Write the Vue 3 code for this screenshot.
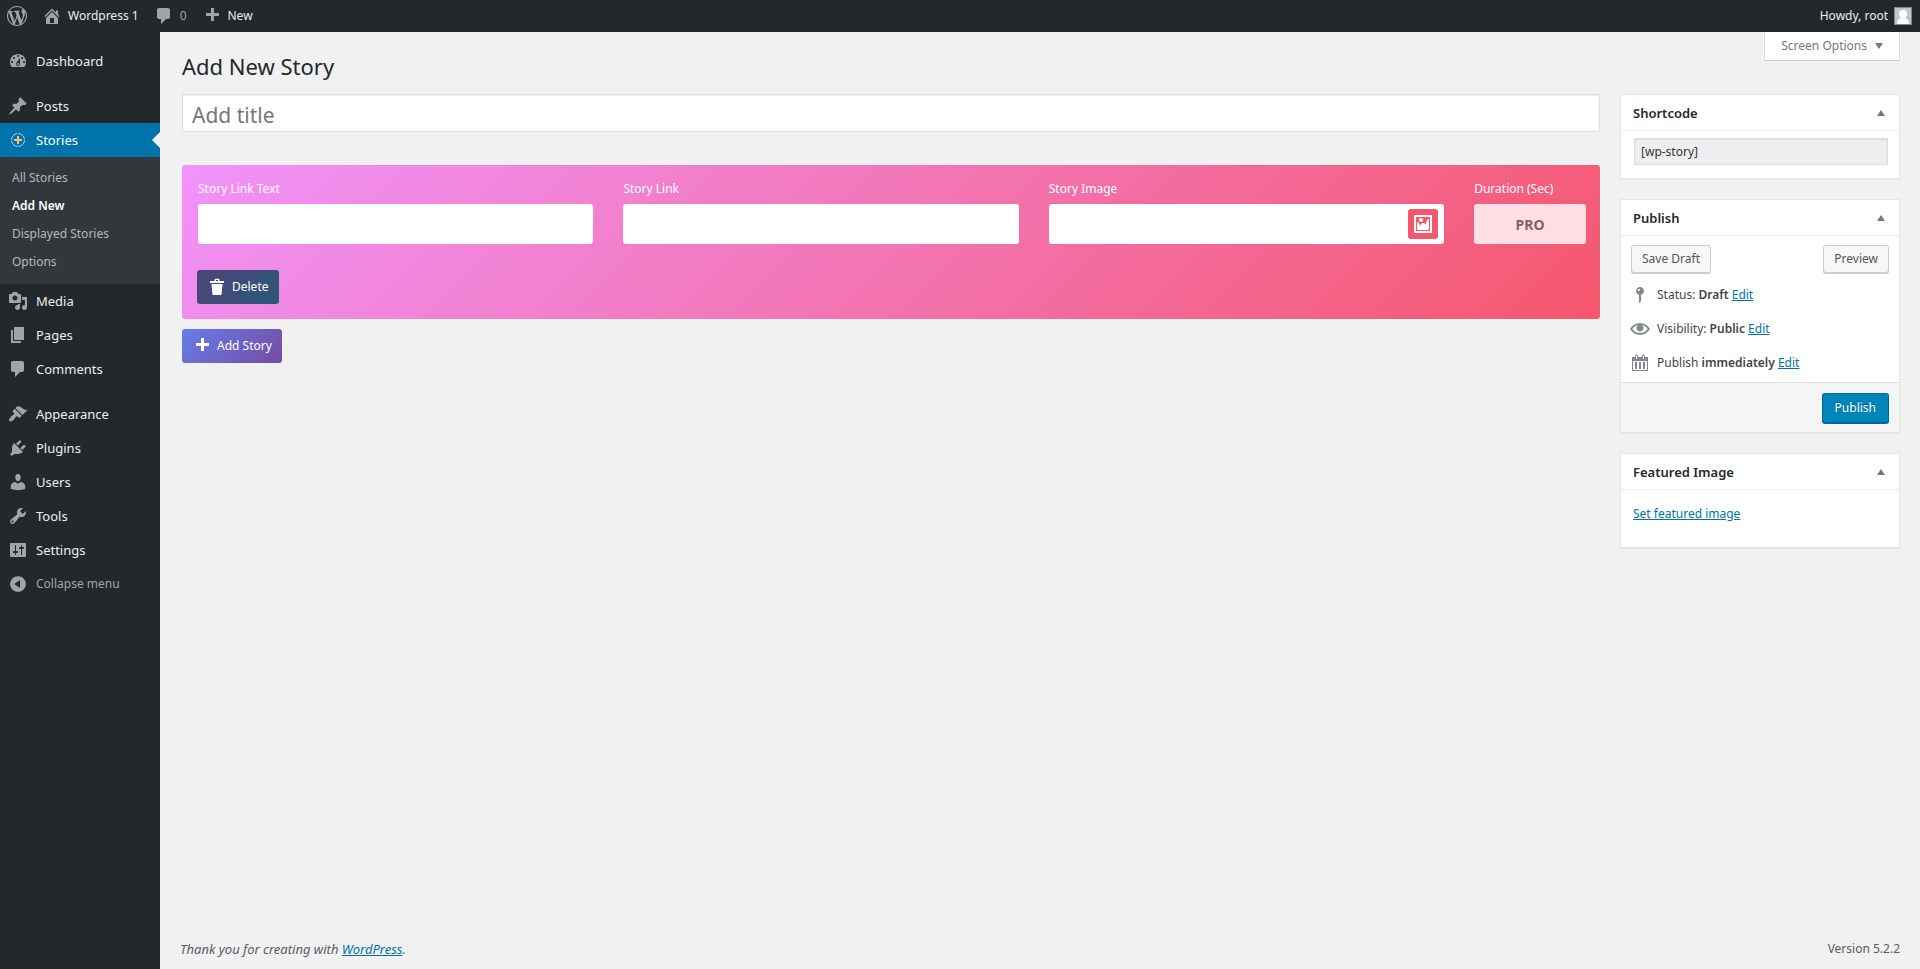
<template>
  <div class="admin">

    <header class="adminbar">
      <nav class="bar-left">
        <a href="#" class="bar-item" aria-label="About WordPress">
          <svg class="icon" viewBox="0 0 20 20"><path :d="icons.wordpress" /></svg>
        </a>
        <a href="#" class="bar-item">
          <svg class="icon" viewBox="0 0 20 20"><path :d="icons.home" /></svg>
          <span>Wordpress 1</span>
        </a>
        <a href="#" class="bar-item count">
          <svg class="icon" viewBox="0 0 20 20"><path :d="icons.comments" /></svg>
          <span>0</span>
        </a>
        <a href="#" class="bar-item">
          <svg class="icon" viewBox="0 0 20 20"><path :d="icons.plus" /></svg>
          <span>New</span>
        </a>
      </nav>
      <a href="#" class="bar-item account">
        <span>Howdy, root</span>
        <svg class="avatar" viewBox="0 0 18 18">
          <rect width="18" height="18" fill="#82878c" />
          <rect x="1" y="1" width="16" height="16" fill="#c5c5c5" />
          <circle cx="9" cy="7" r="4" fill="#fff" />
          <path d="M3 17c0-4 2.500-5.500 4-6.500h4c1.500 1 4 2.500 4 6.500z" fill="#fff" />
        </svg>
      </a>
    </header>

    <div class="body">
      <aside class="sidebar">
        <ul class="menu">
          <li v-for="item in menu" :key="item.label" :class="{ active: item.children, spaced: item.spaced }">
            <a href="#" class="menu-link">
              <svg v-if="item.icon" class="icon" viewBox="0 0 20 20"><path :d="icons[item.icon]" /></svg>
              <svg v-else class="icon" viewBox="0 0 20 20">
                <circle cx="10" cy="10" r="6.500" fill="none" stroke="#b9d3e0" stroke-dasharray="9 1" />
                <path d="M9 6h2v3h3v2h-3v3H9v-3H6V9h3z" fill="#f6c078" />
              </svg>
              <span>{{ item.label }}</span>
            </a>
            <ul v-if="item.children" class="submenu">
              <li v-for="child in item.children" :key="child">
                <a href="#" :class="{ current: child === 'Add New' }">{{ child }}</a>
              </li>
            </ul>
          </li>
        </ul>
        <button type="button" class="menu-link collapse">
          <svg class="icon" viewBox="0 0 20 20"><path :d="icons.collapse" /></svg>
          <span>Collapse menu</span>
        </button>
      </aside>

      <main class="content">
        <div class="top">
          <h1>Add New Story</h1>
          <button type="button" class="screen-options">
            Screen Options
            <svg class="arrow" viewBox="0 0 8 6"><path d="M0 0h8L4 6z" /></svg>
          </button>
        </div>

        <form class="columns" @submit.prevent>
          <div class="primary">
            <input v-model="title" class="title" type="text" placeholder="Add title" aria-label="Add title">

            <section class="story">
              <div class="fields">
                <div class="field">
                  <label for="link-text">Story Link Text</label>
                  <input id="link-text" type="text">
                </div>
                <div class="field">
                  <label for="link">Story Link</label>
                  <input id="link" type="text">
                </div>
                <div class="field">
                  <label for="image">Story Image</label>
                  <div class="picker">
                    <input id="image" type="text">
                    <button type="button" class="pick" aria-label="Choose image">
                      <svg class="icon" viewBox="0 0 20 20"><path :d="icons.image" /></svg>
                    </button>
                  </div>
                </div>
                <div class="field duration">
                  <label for="duration">Duration (Sec)</label>
                  <input id="duration" type="text" value="PRO" disabled>
                </div>
              </div>
              <button type="button" class="story-button delete">
                <svg class="icon" viewBox="0 0 20 20"><path :d="icons.trash" /></svg>
                Delete
              </button>
            </section>

            <button type="button" class="story-button add">
              <svg class="icon" viewBox="0 0 20 20"><path :d="icons.plus" /></svg>
              Add Story
            </button>
          </div>

          <div class="secondary">
            <section class="postbox">
              <div class="postbox-head">
                <h2>Shortcode</h2>
                <button type="button" class="toggle" aria-label="Toggle Shortcode">
                  <svg class="arrow" viewBox="0 0 8 6"><path d="M0 6h8L4 0z" /></svg>
                </button>
              </div>
              <div class="shortcode">
                <input type="text" value="[wp-story]" readonly aria-label="Shortcode">
              </div>
            </section>

            <section class="postbox">
              <div class="postbox-head">
                <h2>Publish</h2>
                <button type="button" class="toggle" aria-label="Toggle Publish">
                  <svg class="arrow" viewBox="0 0 8 6"><path d="M0 6h8L4 0z" /></svg>
                </button>
              </div>
              <div class="draft-actions">
                <button type="button" class="button">Save Draft</button>
                <button type="button" class="button">Preview</button>
              </div>
              <ul class="misc">
                <li v-for="row in publishing" :key="row.icon">
                  <svg class="icon" viewBox="0 0 20 20"><path :d="icons[row.icon]" /></svg>
                  <span>{{ row.label }} <b>{{ row.value }}</b> <a href="#">Edit</a></span>
                </li>
              </ul>
              <div class="publish-actions">
                <button type="submit" class="button main">Publish</button>
              </div>
            </section>

            <section class="postbox">
              <div class="postbox-head">
                <h2>Featured Image</h2>
                <button type="button" class="toggle" aria-label="Toggle Featured Image">
                  <svg class="arrow" viewBox="0 0 8 6"><path d="M0 6h8L4 0z" /></svg>
                </button>
              </div>
              <div class="featured">
                <a href="#">Set featured image</a>
              </div>
            </section>
          </div>
        </form>

        <footer class="footer">
          <em>Thank you for creating with <a href="#">WordPress</a>.</em>
          <span>Version 5.2.2</span>
        </footer>
      </main>
    </div>

  </div>
</template>

<script setup>
  import { ref } from "vue";

  const title = ref("");

  const menu = [
    { label: "Dashboard", icon: "dashboard" },
    { label: "Posts", icon: "post", spaced: true },
    { label: "Stories", children: ["All Stories", "Add New", "Displayed Stories", "Options"] },
    { label: "Media", icon: "media" },
    { label: "Pages", icon: "page" },
    { label: "Comments", icon: "comments" },
    { label: "Appearance", icon: "appearance", spaced: true },
    { label: "Plugins", icon: "plugins" },
    { label: "Users", icon: "users" },
    { label: "Tools", icon: "tools" },
    { label: "Settings", icon: "settings" },
  ];

  const publishing = [
    { icon: "status", label: "Status:", value: "Draft" },
    { icon: "visibility", label: "Visibility:", value: "Public" },
    { icon: "calendar", label: "Publish", value: "immediately" },
  ];

  const icons = {
    wordpress: "M20 10c0-5.510-4.490-10-10-10C4.480 0 0 4.490 0 10c0 5.520 4.480 10 10 10 5.510 0 10-4.480 10-10zM7.780 15.370L4.370 6.220c.55-.02 1.170-.08 1.170-.08.5-.06.44-1.130-.06-1.110 0 0-1.450.11-2.370.11-.18 0-.37 0-.58-.01C4.120 2.690 6.870 1.110 10 1.110c2.330 0 4.450.87 6.050 2.340-.68-.11-1.650.39-1.650 1.580 0 .74.45 1.360.9 2.100.35.61.55 1.360.55 2.460 0 1.490-1.400 5-1.400 5l-3.030-8.370c.54-.02.82-.17.82-.17.5-.05.44-1.250-.06-1.220 0 0-1.440.12-2.380.12-.87 0-2.330-.12-2.330-.12-.5-.03-.56 1.200-.06 1.220l.92.08 1.260 3.410zM17.410 10c.24-.64.74-1.870.43-4.250.7 1.290 1.050 2.710 1.050 4.250 0 3.290-1.730 6.240-4.400 7.780.97-2.590 1.940-5.200 2.920-7.780zM6.100 18.090C3.120 16.650 1.110 13.530 1.110 10c0-1.300.23-2.480.72-3.590C3.250 10.300 4.670 14.200 6.100 18.090zm4.030-6.630l2.580 6.980c-.86.29-1.760.45-2.710.45-.79 0-1.570-.11-2.290-.33.81-2.380 1.620-4.740 2.420-7.100z",
    home: "M16 8.500l1.530 1.530-1.060 1.060L10 4.600l-6.470 6.490-1.060-1.060L10 2.500l4 4v-2h2v4zm-6-2.460l6 5.990V18H4v-5.970zM12 17v-5H8v5h4z",
    comments: "M5 2h9c1.100 0 2 .9 2 2v7c0 1.100-.9 2-2 2h-2l-5 5v-5H5c-1.100 0-2-.9-2-2V4c0-1.100.9-2 2-2z",
    plus: "M17 7v3h-5v5H9v-5H4V7h5V2h3v5h5z",
    dashboard: "M3.760 16h12.480c1.100-1.370 1.760-3.110 1.760-5 0-4.420-3.580-8-8-8s-8 3.580-8 8c0 1.890.66 3.630 1.760 5zM10 4c.55 0 1 .45 1 1s-.45 1-1 1-1-.45-1-1 .45-1 1-1zM6 6c.55 0 1 .45 1 1s-.45 1-1 1-1-.45-1-1 .45-1 1-1zm8 0c.55 0 1 .45 1 1s-.45 1-1 1-1-.45-1-1 .45-1 1-1zm-5.370 5.550L12 7v6c0 1.100-.9 2-2 2s-2-.9-2-2c0-.57.24-1.080.63-1.450zM4 10c.55 0 1 .45 1 1s-.45 1-1 1-1-.45-1-1 .45-1 1-1zm12 0c.55 0 1 .45 1 1s-.45 1-1 1-1-.45-1-1 .45-1 1-1zm-5 3c0-.55-.45-1-1-1s-1 .45-1 1 .45 1 1 1 1-.45 1-1z",
    post: "M10.440 3.020l1.820-1.820 6.360 6.350-1.830 1.820c-1.050-.68-2.480-.57-3.410.36l-.75.75c-.92.93-1.040 2.350-.35 3.410l-1.830 1.820-2.410-2.410-2.800 2.790c-.42.42-3.380 2.710-3.800 2.290s1.860-3.390 2.280-3.810l2.790-2.790L4.100 9.360l1.830-1.820c1.050.69 2.480.57 3.400-.36l.75-.75c.93-.92 1.050-2.350.36-3.410z",
    media: "M13 11V4c0-.55-.45-1-1-1h-1.670L9 1H5L3.670 3H2c-.55 0-1 .45-1 1v7c0 .55.45 1 1 1h10c.55 0 1-.45 1-1zM7 4.500c1.380 0 2.500 1.120 2.500 2.500S8.380 9.500 7 9.500 4.500 8.380 4.500 7 5.620 4.500 7 4.500zM14 6h5v10.500c0 1.380-1.120 2.500-2.500 2.500S14 17.880 14 16.500s1.120-2.500 2.500-2.500c.17 0 .34.02.5.05V9h-3V6zm-4 8.050V13h2v3.500c0 1.380-1.120 2.500-2.500 2.500S7 17.880 7 16.500 8.120 14 9.500 14c.17 0 .34.02.5.05z",
    page: "M6 15V2h10v13H6zm-1 1h8v2H3V5h2v11z",
    appearance: "M14.480 11.060L7.410 3.990l1.500-1.500c.5-.56 2.300-.47 3.510.32 1.210.8 1.430 1.280 2.910 2.100 1.180.64 2.450 1.260 4.450.85zm-.71.71L6.700 4.700 4.930 6.470c-.39.39-.39 1.020 0 1.410l1.060 1.060c.39.39.39 1.030 0 1.420-.6.6-1.430 1.110-2.210 1.690-.35.26-.7.53-1.010.84C1.430 14.230.4 16.080 1.400 17.070c.99 1 2.840-.03 4.180-1.360.31-.31.58-.66.85-1.020.57-.78 1.080-1.610 1.690-2.210.39-.39 1.020-.39 1.410 0l1.060 1.060c.39.39 1.020.39 1.410 0z",
    plugins: "M13.110 4.360L9.870 7.600 8 5.730l3.240-3.240c.35-.34 1.050-.2 1.560.32.52.51.66 1.210.31 1.550zm-8 1.770l.91-1.120 9.010 9.010-1.190.84c-.71.71-2.630 1.160-3.820 1.160H6.140L4.900 17.260c-.59.59-1.540.59-2.120 0-.59-.58-.59-1.530 0-2.120l1.240-1.240v-3.880c0-1.130.4-3.190 1.090-3.890zm7.260 3.970l3.240-3.240c.34-.35 1.040-.21 1.550.31.52.51.66 1.210.31 1.550l-3.240 3.250z",
    users: "M10 9.250c-2.270 0-2.730-3.440-2.730-3.440C7 4.020 7.820 2 9.970 2c2.160 0 2.980 2.020 2.710 3.810 0 0-.41 3.440-2.680 3.440zm0 2.570L12.720 10c2.390 0 4.520 2.330 4.520 4.530v2.490s-3.650 1.130-7.240 1.130c-3.650 0-7.240-1.130-7.240-1.130v-2.490c0-2.250 1.940-4.480 4.470-4.480z",
    tools: "M16.680 9.770c-1.340 1.340-3.300 1.670-4.950.99l-5.410 6.520c-.99.99-2.590.99-3.580 0s-.99-2.590 0-3.570l6.520-5.420c-.68-1.650-.35-3.610.99-4.950 1.280-1.280 3.120-1.620 4.720-1.060l-2.890 2.890 2.820 2.820 2.860-2.870c.53 1.580.18 3.390-1.080 4.650zM3.810 16.210c.4.39 1.040.39 1.430 0 .4-.4.4-1.040 0-1.430-.39-.4-1.030-.4-1.430 0-.39.39-.39 1.030 0 1.430z",
    settings: "M18 16V4c0-.55-.45-1-1-1H3c-.55 0-1 .45-1 1v12c0 .55.45 1 1 1h14c.55 0 1-.45 1-1zM8 11h1c.55 0 1 .45 1 1s-.45 1-1 1H8v1.500c0 .28-.22.5-.5.5s-.5-.22-.5-.5V13H6c-.55 0-1-.45-1-1s.45-1 1-1h1V5.500c0-.28.22-.5.5-.5s.5.22.5.5V11zm5-2h-1c-.55 0-1-.45-1-1s.45-1 1-1h1V5.500c0-.28.22-.5.5-.5s.5.22.5.5V7h1c.55 0 1 .45 1 1s-.45 1-1 1h-1v5.500c0 .28-.22.5-.5.5s-.5-.22-.5-.5V9z",
    collapse: "M10 2.160c4.330 0 7.840 3.510 7.840 7.840s-3.510 7.840-7.840 7.840S2.160 14.330 2.160 10 5.710 2.160 10 2.160zm2 11.720V6.120L6.180 9.970z",
    image: "M2.250 1h15.500c.69 0 1.250.56 1.250 1.250v15.500c0 .69-.56 1.250-1.250 1.250H2.250C1.560 19 1 18.440 1 17.750V2.250C1 1.560 1.560 1 2.250 1zM17 17V3H3v14h14zM10 6c0-1.100-.9-2-2-2s-2 .9-2 2 .9 2 2 2 2-.9 2-2zm3 5s0-6 3-6v10c0 .55-.45 1-1 1H5c-.55 0-1-.45-1-1V8c2 0 3 4 3 4s1-3 3-3 3 2 3 2z",
    trash: "M7.500 4V3c0-.8.500-1.300 1.300-1.300h2.400c.8 0 1.300.500 1.300 1.300v1H17v2H3V4zM9 4h2V3H9zM4.500 7h11l-1 11h-9z",
    status: "M14 6c0 1.860-1.280 3.410-3 3.860V16c0 1-2 2-2 2V9.860c-1.720-.45-3-2-3-3.860 0-2.210 1.790-4 4-4s4 1.790 4 4zM8 5c0 .55.45 1 1 1s1-.45 1-1-.45-1-1-1-1 .45-1 1z",
    visibility: "M19.700 9.400C17.700 6 14 3.900 10 3.900S2.300 6 .3 9.400L0 10l.3.6c2 3.400 5.700 5.500 9.700 5.500s7.700-2.100 9.700-5.500l.3-.6-.3-.6zM10 14.100c-3.100 0-6-1.600-7.700-4.100C3.600 8 5.700 6.600 8 6.100c-.9.6-1.500 1.700-1.500 2.900 0 1.900 1.600 3.500 3.500 3.500s3.500-1.600 3.500-3.500c0-1.200-.6-2.300-1.500-2.900 2.300.5 4.400 1.900 5.700 3.900-1.700 2.500-4.600 4.100-7.700 4.100z",
    calendar: "M15 4h3v14H2V4h3V3c0-.83.67-1.500 1.500-1.500S8 2.170 8 3v1h4V3c0-.83.67-1.500 1.500-1.500S15 2.170 15 3v1zM6 3v2.500c0 .28.22.5.5.5s.5-.22.5-.5V3c0-.28-.22-.5-.5-.5S6 2.720 6 3zm7 0v2.500c0 .28.22.5.5.5s.5-.22.5-.5V3c0-.28-.22-.5-.5-.5s-.5.22-.5.5zm4 14V8H3v9h14zM7 16V9H5v7h2zm4 0V9H9v7h2zm4 0V9h-2v7h2z",
  };
</script>

<style>
body {
  background: #f1f1f1;
}
</style>

<style scoped>
* {
  box-sizing: border-box;
}

.admin {
  min-height: 100vh;
  display: flex;
  flex-direction: column;
  font-family: "Segoe UI", "Noto Sans", "Open Sans", sans-serif;
  font-size: 12px;
  line-height: 18px;
  color: #444;
}

button,
input {
  font: inherit;
  margin: 0;
}

button {
  cursor: pointer;
}

a {
  color: #0073aa;
}

ul {
  list-style: none;
  margin: 0;
  padding: 0;
}

.icon {
  width: 20px;
  height: 20px;
  flex: none;
  fill: currentColor;
}

.arrow {
  width: 8px;
  height: 6px;
  fill: #72777c;
}

/* admin bar */
.adminbar {
  height: 32px;
  display: flex;
  justify-content: space-between;
  padding-right: 1px;
  background: #23282d;
}

.bar-left {
  display: flex;
  gap: 1px;
}

.bar-item {
  display: flex;
  align-items: center;
  gap: 6px;
  padding: 0 7px;
  color: #eee;
  text-decoration: none;
}

.bar-item .icon {
  color: #a0a5aa;
}

.count {
  color: #a0a5aa;
}

.avatar {
  width: 18px;
  height: 18px;
}

/* side menu */
.body {
  flex: 1;
  display: flex;
}

.sidebar {
  width: 160px;
  flex: none;
  padding-top: 12px;
  background: #23282d;
}

.spaced {
  margin-top: 11px;
}

.menu-link {
  position: relative;
  height: 34px;
  display: flex;
  align-items: center;
  gap: 8px;
  padding: 0 8px;
  font-size: 13px;
  color: #eee;
  text-decoration: none;
}

.menu-link .icon {
  color: #a0a5aa;
}

.active .menu-link {
  background: #0073aa;
  color: #fff;
}

.active .menu-link::after {
  content: "";
  position: absolute;
  right: 0;
  top: 9px;
  border: 8px solid transparent;
  border-left: 0;
  border-right-color: #f1f1f1;
}

.submenu {
  padding: 7px 0 8px;
  background: #32373c;
}

.submenu a {
  display: block;
  padding: 5px 12px;
  color: #b4b9be;
  text-decoration: none;
}

.submenu .current {
  color: #fff;
  font-weight: 600;
}

.collapse {
  width: 100%;
  border: 0;
  background: none;
  font-size: 12px;
  color: #a0a5aa;
}

/* page */
.content {
  flex: 1;
  min-width: 0;
  display: flex;
  flex-direction: column;
  padding: 0 20px 0 22px;
}

.top {
  height: 62px;
  display: flex;
  justify-content: space-between;
  align-items: flex-start;
}

h1 {
  margin: 0;
  padding-top: 19px;
  font-size: 22px;
  font-weight: 400;
  line-height: 30px;
  color: #23282d;
}

.screen-options {
  height: 29px;
  display: flex;
  align-items: center;
  gap: 8px;
  padding: 0 16px;
  border: 1px solid #ddd;
  border-top: 0;
  border-bottom-color: #ccc;
  background: #fff;
  color: #72777c;
}

.columns {
  display: flex;
  align-items: flex-start;
  gap: 20px;
}

.primary {
  flex: 1;
  min-width: 0;
}

.title {
  display: block;
  width: 100%;
  height: 38px;
  padding: 4px 9px 0;
  border: 1px solid #ddd;
  box-shadow: inset 0 1px 2px rgba(0, 0, 0, 0.07);
  background: #fff;
  font-size: 21px;
  color: #32373c;
}

.title::placeholder {
  color: #72777c;
}

.story {
  margin: 33px 0 10px;
  padding: 15px 0;
  border-radius: 3px;
  background: linear-gradient(135deg, #f093fb 0%, #f5576c 100%);
}

.fields {
  display: flex;
}

.field {
  width: 30%;
  padding: 0 14px 0 16px;
}

.duration {
  width: 10%;
}

.field label {
  display: block;
  margin-bottom: 6px;
  white-space: nowrap;
  color: #fff;
}

.field input {
  display: block;
  width: 100%;
  height: 40px;
  padding: 0 10px;
  border: 0;
  border-radius: 3px;
  background: #fff;
}

.field:not(.duration) input {
  color: #32373c;
}

.duration input {
  background: rgba(255, 255, 255, 0.8);
  font-size: 14px;
  font-weight: 700;
  text-align: center;
  color: #865f6a;
}

.picker {
  position: relative;
}

.pick {
  position: absolute;
  top: 5px;
  right: 6px;
  width: 30px;
  height: 30px;
  padding: 5px;
  border: 0;
  border-radius: 3px;
  background: #f5576c;
  color: #fff;
}

.story-button {
  height: 34px;
  display: flex;
  align-items: center;
  gap: 5px;
  padding: 0 10px;
  border: 0;
  border-radius: 3px;
  color: #fff;
}

.delete {
  margin: 26px 15px 0;
  background: linear-gradient(135deg, #4f4478 0%, #2a5978 100%);
}

.add {
  background: linear-gradient(135deg, #667eea 0%, #764ba2 100%);
}

/* boxes on the right */
.secondary {
  width: 280px;
  flex: none;
}

.postbox {
  margin-bottom: 20px;
  border: 1px solid #e5e5e5;
  box-shadow: 0 1px 1px rgba(0, 0, 0, 0.04);
  background: #fff;
}

.postbox-head {
  height: 36px;
  display: flex;
  align-items: center;
  justify-content: space-between;
  padding: 0 12px;
  border-bottom: 1px solid #eee;
}

h2 {
  margin: 0;
  font-size: 13px;
  font-weight: 600;
  color: #23282d;
}

.toggle {
  display: flex;
  padding: 2px;
  border: 0;
  background: none;
}

.shortcode {
  padding: 7px 11px 13px 13px;
}

.shortcode input {
  display: block;
  width: 100%;
  height: 27px;
  padding: 3px 6px;
  border: 1px solid #ddd;
  box-shadow: inset 0 1px 2px rgba(0, 0, 0, 0.07);
  background: #eee;
  color: #32373c;
}

.draft-actions {
  display: flex;
  justify-content: space-between;
  padding: 9px 10px 0;
}

.button {
  height: 28px;
  padding: 0 10px;
  border: 1px solid #ccc;
  border-radius: 3px;
  box-shadow: 0 1px 0 #ccc;
  background: #f7f7f7;
  color: #555;
}

.main {
  height: 30px;
  padding: 0 12px;
  border-color: #0073aa #006799 #006799;
  box-shadow: 0 1px 0 #006799;
  background: #0085ba;
  color: #fff;
  text-shadow: 0 -1px 1px #006799;
}

.misc {
  padding: 5px 0 2px;
}

.misc li {
  height: 34px;
  display: flex;
  align-items: center;
  gap: 7px;
  padding: 0 9px;
}

.misc .icon {
  color: #82878c;
}

.misc b {
  font-weight: 600;
}

.publish-actions {
  display: flex;
  justify-content: flex-end;
  padding: 10px 10px 9px;
  border-top: 1px solid #ddd;
  background: #f5f5f5;
}

.featured {
  padding: 15px 12px 24px;
}

.footer {
  display: flex;
  justify-content: space-between;
  margin: auto 0 0 -2px;
  padding: 10px 0 11px;
  color: #555d66;
}

.footer em {
  font-size: 13px;
}
</style>
